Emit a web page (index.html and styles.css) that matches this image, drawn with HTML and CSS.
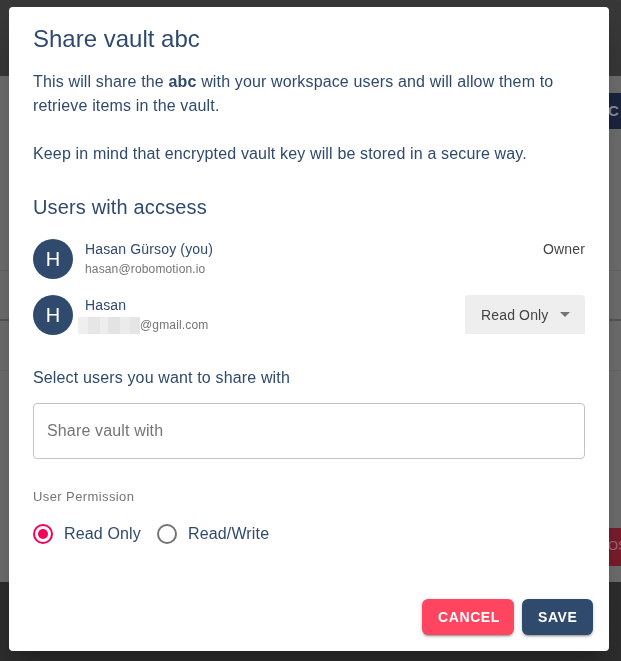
FILE: index.html
```html
<!DOCTYPE html>
<html lang="en">

  <head>
    <meta charset="UTF-8">
    <meta name="viewport" content="width=device-width, initial-scale=1.0">
    <title>Share vault</title>
    <link rel="stylesheet" href="styles.css">
  </head>

  <body>
    <!-- page behind the modal -->
    <div class="page">
      <div class="topbar"></div>
      <div class="main">
        <div class="main_row row_action">
          <span class="bg_btn bg_btn_navy">C</span>
        </div>
        <div class="main_row row_item"></div>
        <div class="main_row row_item row_line"></div>
        <div class="main_row row_item"></div>
        <div class="main_row row_action row_bottom">
          <span class="bg_btn bg_btn_red">OS</span>
        </div>
      </div>
      <div class="footer"></div>
    </div>

    <!-- share dialog -->
    <div class="dialog">
      <h2 class="dialog_title">Share vault abc</h2>

      <div class="dialog_content">
        <p class="info">
          This will share the <b>abc</b> with your workspace users and will allow them to retrieve items in the vault.
          <br><br>
          Keep in mind that encrypted vault key will be stored in a secure way.
        </p>

        <h3 class="section_title">Users with accsess</h3>

        <div class="user_list">
          <div class="user">
            <div class="avatar">H</div>
            <div class="user_text">
              <div class="user_name">Hasan Gürsoy (you)</div>
              <div class="user_mail">hasan@robomotion.io</div>
            </div>
            <div class="user_role">Owner</div>
          </div>
          <div class="user">
            <div class="avatar">H</div>
            <div class="user_text">
              <div class="user_name">Hasan</div>
              <div class="user_mail"><span class="blur"></span>@gmail.com</div>
            </div>
            <div class="select">
              <span>Read Only</span>
              <svg width="10" height="5" viewBox="0 0 10 5"><path d="M0 0l5 5 5-5z" fill="#757575"/></svg>
            </div>
          </div>
        </div>

        <div class="select_label">Select users you want to share with</div>
        <div class="input">Share vault with</div>

        <div class="perm_label">User Permission</div>
        <div class="radios">
          <label class="radio checked"><span class="radio_dot"></span>Read Only</label>
          <label class="radio"><span class="radio_dot"></span>Read/Write</label>
        </div>
      </div>

      <div class="dialog_actions">
        <button class="btn btn_cancel">Cancel</button>
        <button class="btn btn_save">Save</button>
      </div>
    </div>
  </body>

</html>
```

FILE: styles.css
```css
* {
  margin: 0;
  padding: 0;
  box-sizing: border-box;
}

body {
  background-color: #2e2e2e;
  font-family: "Liberation Sans", Arial, sans-serif;
  letter-spacing: .15px;
  overflow: hidden;
}

/* dimmed page behind */
.page {
  height: 661px;
  display: flex;
  flex-direction: column;
}

.topbar {
  height: 76px;
  background-color: #383838;
}

.main {
  flex: 1;
  background-color: #6e6e6e;
  display: flex;
  flex-direction: column;
  padding-top: 17px;
}

.main_row {
  display: flex;
  justify-content: flex-end;
}

.row_item {
  height: 50px;
  border-bottom: 1px solid #676767;
}

.row_action {
  height: 128px;
}

.row_line {
  border-bottom: 2px solid #575757;
}

.row_bottom {
  margin-top: auto;
  height: auto;
  padding-bottom: 16px;
}

.bg_btn {
  width: 13px;
  height: 36px;
  overflow: hidden;
  font-size: 15px;
  font-weight: bold;
  color: #8a8f9c;
  line-height: 36px;
}

.bg_btn_navy {
  background-color: #1b2541;
}

.bg_btn_red {
  height: 38px;
  background-color: #7b1d2d;
  color: #a36e76;
  font-weight: normal;
  font-size: 13px;
  letter-spacing: 0;
}

.footer {
  height: 79px;
  background-color: #2e2e2e;
}

/* dialog */
.dialog {
  position: fixed;
  left: 9px;
  top: 7px;
  width: 600px;
  height: 644px;
  background-color: #fff;
  border-radius: 4px;
  display: flex;
  flex-direction: column;
  color: #304a6e;
  box-shadow: 0 11px 15px -7px rgba(0, 0, 0, .2), 0 24px 38px 3px rgba(0, 0, 0, .14);
}

.dialog_title {
  font-size: 24px;
  font-weight: normal;
  line-height: 32px;
  letter-spacing: 0;
  padding: 16px 24px 0;
}

.dialog_content {
  padding: 15px 24px 0;
}

.info {
  font-size: 16px;
  line-height: 24px;
}

.section_title {
  font-size: 20px;
  font-weight: normal;
  line-height: 32px;
  margin-top: 25px;
}

.user_list {
  display: flex;
  flex-direction: column;
  gap: 16px;
  margin-top: 16px;
}

.user {
  display: flex;
  align-items: flex-start;
}

.avatar {
  width: 40px;
  height: 40px;
  border-radius: 50%;
  background-color: #304a6e;
  color: #fff;
  font-size: 20px;
  line-height: 40px;
  text-align: center;
  margin-right: 12px;
  letter-spacing: 0;
}

.user_text {
  flex: 1;
}

.user_name {
  font-size: 14px;
  line-height: 20px;
}

.user_mail {
  font-size: 12px;
  line-height: 20px;
  color: #757575;
  display: flex;
  align-items: center;
}

.blur {
  width: 62px;
  height: 17px;
  margin-left: -7px;
  background: linear-gradient(90deg, #efefef 0 10px, #e6e6e6 10px 22px, #ededed 22px 30px, #e3e3e3 30px 42px, #ebebeb 42px 52px, #e5e5e5 52px);
}

.user_role {
  font-size: 14px;
  line-height: 20px;
  color: #444;
}

.select {
  width: 120px;
  height: 39px;
  background-color: #eeeeee;
  border-radius: 4px 4px 0 0;
  display: flex;
  align-items: center;
  justify-content: space-between;
  padding: 0 15px 0 16px;
  font-size: 14px;
  color: #444;
}

.select_label {
  font-size: 16px;
  line-height: 24px;
  margin-top: 31px;
}

.input {
  height: 56px;
  margin-top: 13px;
  border: 1px solid #c4c4c4;
  border-radius: 4px;
  padding: 0 13px;
  font-size: 16px;
  line-height: 54px;
  color: #757575;
}

.perm_label {
  font-size: 13px;
  line-height: 20px;
  letter-spacing: .4px;
  color: #757575;
  margin-top: 28px;
}

.radios {
  display: flex;
  gap: 16px;
  margin-top: 6px;
  height: 42px;
  align-items: center;
}

.radio {
  display: flex;
  align-items: center;
  gap: 11px;
  font-size: 16px;
}

.radio_dot {
  width: 20px;
  height: 20px;
  border: 2px solid #757575;
  border-radius: 50%;
  display: flex;
  align-items: center;
  justify-content: center;
}

.radio.checked .radio_dot {
  border-color: #f50057;
}

.radio.checked .radio_dot::after {
  content: "";
  width: 10px;
  height: 10px;
  border-radius: 50%;
  background-color: #f50057;
}

.dialog_actions {
  margin-top: auto;
  display: flex;
  justify-content: flex-end;
  gap: 8px;
  padding: 0 16px 16px;
}

.btn {
  height: 36px;
  border: none;
  border-radius: 6px;
  padding: 0 16px;
  font-family: "Liberation Sans", Arial, sans-serif;
  font-size: 14px;
  font-weight: bold;
  letter-spacing: .6px;
  text-transform: uppercase;
  color: #fff;
  box-shadow: 0 3px 1px -2px rgba(0, 0, 0, .2), 0 2px 2px 0 rgba(0, 0, 0, .14), 0 1px 5px 0 rgba(0, 0, 0, .12);
}

.btn_cancel {
  width: 92px;
  background-color: #ff4560;
}

.btn_save {
  width: 71px;
  background-color: #304a6e;
}
```
